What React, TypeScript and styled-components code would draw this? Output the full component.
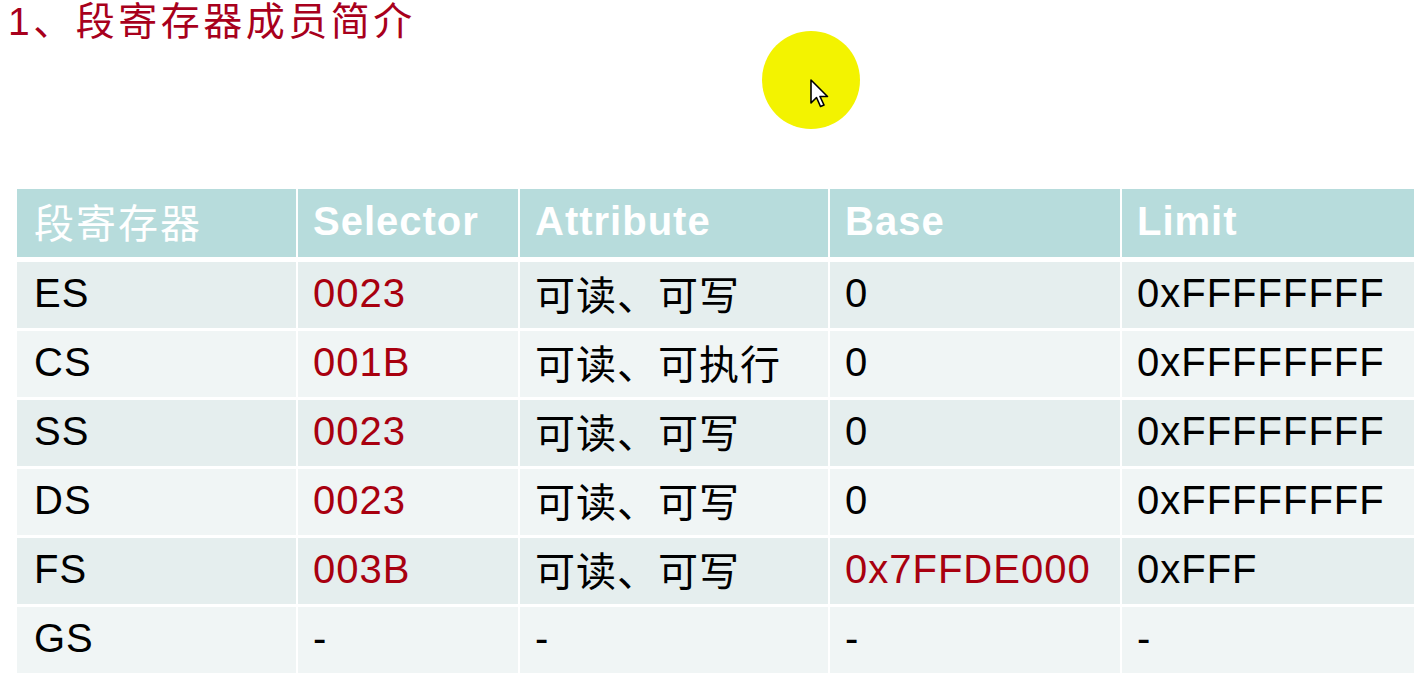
import React from 'react';
import styled, { createGlobalStyle } from 'styled-components';

const GlobalStyle = createGlobalStyle`
  html, body {
    margin: 0;
    padding: 0;
    background: #ffffff;
  }
  body {
    font-family: "Liberation Sans", "Noto Sans CJK SC", Arial, sans-serif;
  }
`;

const Slide = styled.div`
  position: relative;
  width: 1426px;
  height: 686px;
  overflow: hidden;
  background: #ffffff;
`;

const Title = styled.h1`
  margin: 0;
  padding-left: 8px;
  height: 44px;
  line-height: 44px;
  font-size: 39px;
  font-weight: 400;
  letter-spacing: 3.5px;
  color: #a8001c;
  font-family: "Liberation Sans", "Noto Sans CJK SC", sans-serif;
`;

const Table = styled.div`
  display: flex;
  flex-direction: column;
  gap: 3px;
  margin: 145px 0 0 17px;
  width: 1397px;
`;

const Row = styled.div<{ $head?: boolean }>`
  display: grid;
  grid-template-columns: 279px 220px 308px 290px 292px;
  column-gap: 2px;
  height: ${p => (p.$head ? '68px' : '66px')};
  margin-bottom: ${p => (p.$head ? '2px' : '0')};
`;

const Cell = styled.div<{ $tone: 'head' | 'odd' | 'even'; $red?: boolean }>`
  display: flex;
  align-items: center;
  padding: 0 0 4px 15px;
  background: ${p => (p.$tone === 'head' ? '#b7dcdc' : p.$tone === 'odd' ? '#e5eeee' : '#f0f5f5')};
  color: ${p => (p.$tone === 'head' ? '#ffffff' : p.$red ? '#a8000f' : '#000000')};
  font-size: 40px;
  letter-spacing: 1px;
  font-weight: ${p => (p.$tone === 'head' ? 700 : 400)};
  font-family: "Liberation Sans", "Noto Sans CJK SC", sans-serif;
  white-space: nowrap;

  &:first-child {
    padding-left: 17px;
  }
`;

const CjkHead = styled.span`
  font-weight: 400;
  font-family: "Noto Sans CJK SC", sans-serif;
  letter-spacing: 2px;
`;

const Highlight = styled.div`
  position: absolute;
  left: 762px;
  top: 31px;
  width: 98px;
  height: 98px;
  border-radius: 50%;
  background: #f3f300;
`;

const Pointer = styled.svg`
  position: absolute;
  left: 810px;
  top: 79px;
`;

const headers = ['Selector', 'Attribute', 'Base', 'Limit'];

const rows: { name: string; sel: string; selRed: boolean; attr: string; base: string; baseRed?: boolean; limit: string }[] = [
  { name: 'ES', sel: '0023', selRed: true, attr: '可读、可写', base: '0', limit: '0xFFFFFFFF' },
  { name: 'CS', sel: '001B', selRed: true, attr: '可读、可执行', base: '0', limit: '0xFFFFFFFF' },
  { name: 'SS', sel: '0023', selRed: true, attr: '可读、可写', base: '0', limit: '0xFFFFFFFF' },
  { name: 'DS', sel: '0023', selRed: true, attr: '可读、可写', base: '0', limit: '0xFFFFFFFF' },
  { name: 'FS', sel: '003B', selRed: true, attr: '可读、可写', base: '0x7FFDE000', baseRed: true, limit: '0xFFF' },
  { name: 'GS', sel: '-', selRed: false, attr: '-', base: '-', limit: '-' },
];

export default function App() {
  return (
    <Slide>
      <GlobalStyle />
      <Title>1、段寄存器成员简介</Title>
      <Highlight />
      <Pointer width="24" height="34" viewBox="0 0 24 34">
        <path d="M1 1 L1 24 L6.5 18.5 L10.5 27.5 L14 26 L10 17.5 L17.5 17.5 Z" fill="#ffffff" stroke="#000000" strokeWidth="1.6" strokeLinejoin="round" />
      </Pointer>
      <Table>
        <Row $head>
          <Cell $tone="head"><CjkHead>段寄存器</CjkHead></Cell>
          {headers.map(h => (
            <Cell key={h} $tone="head">{h}</Cell>
          ))}
        </Row>
        {rows.map((r, i) => {
          const tone = i % 2 === 0 ? 'odd' : 'even';
          return (
            <Row key={r.name}>
              <Cell $tone={tone}>{r.name}</Cell>
              <Cell $tone={tone} $red={r.selRed}>{r.sel}</Cell>
              <Cell $tone={tone}>{r.attr}</Cell>
              <Cell $tone={tone} $red={r.baseRed}>{r.base}</Cell>
              <Cell $tone={tone}>{r.limit}</Cell>
            </Row>
          );
        })}
      </Table>
    </Slide>
  );
}
